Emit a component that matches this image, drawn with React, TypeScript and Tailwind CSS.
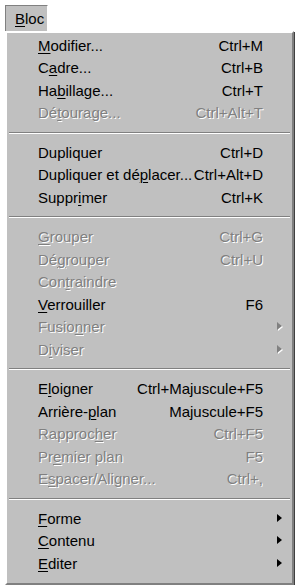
import React from "react";

type Item =
  | { sep: true }
  | { sep?: false; t: string; u: number; sc?: string; dis?: boolean; sub?: boolean };

const items: Item[] = [
  { t: "Modifier...", u: 0, sc: "Ctrl+M" },
  { t: "Cadre...", u: 1, sc: "Ctrl+B" },
  { t: "Habillage...", u: 2, sc: "Ctrl+T" },
  { t: "Détourage...", u: 2, sc: "Ctrl+Alt+T", dis: true },
  { sep: true },
  { t: "Dupliquer", u: -1, sc: "Ctrl+D" },
  { t: "Dupliquer et déplacer...", u: 15, sc: "Ctrl+Alt+D" },
  { t: "Supprimer", u: 5, sc: "Ctrl+K" },
  { sep: true },
  { t: "Grouper", u: 0, sc: "Ctrl+G", dis: true },
  { t: "Dégrouper", u: 2, sc: "Ctrl+U", dis: true },
  { t: "Contraindre", u: 3, dis: true },
  { t: "Verrouiller", u: 0, sc: "F6" },
  { t: "Fusionner", u: 5, dis: true, sub: true },
  { t: "Diviser", u: 1, dis: true, sub: true },
  { sep: true },
  { t: "Eloigner", u: 1, sc: "Ctrl+Majuscule+F5" },
  { t: "Arrière-plan", u: 8, sc: "Majuscule+F5" },
  { t: "Rapprocher", u: 7, sc: "Ctrl+F5", dis: true },
  { t: "Premier plan", u: 2, sc: "F5", dis: true },
  { t: "Espacer/Aligner...", u: 1, sc: "Ctrl+,", dis: true },
  { sep: true },
  { t: "Forme", u: 0, sub: true },
  { t: "Contenu", u: 0, sub: true },
  { t: "Editer", u: 0, sub: true },
];

function Label({ t, u }: { t: string; u: number }) {
  if (u < 0) return <>{t}</>;
  return (
    <>
      {t.slice(0, u)}
      <span className="underline underline-offset-[2px] decoration-1">{t[u]}</span>
      {t.slice(u + 1)}
    </>
  );
}

function Arrow({ dis }: { dis?: boolean }) {
  return (
    <svg width="8" height="11" viewBox="0 0 8 11" className="block">
      {dis && <path d="M2 2 L7 6 L2 10 Z" fill="#ffffff" />}
      <path d="M1 1 L6 5 L1 9 Z" fill={dis ? "#808080" : "#000000"} />
    </svg>
  );
}

export default function App() {
  return (
    <div
      className="min-h-[585px] bg-white pl-[5px] pt-[5px] text-[15px] leading-none text-black"
      style={{ fontFamily: '"Liberation Sans", Arial, sans-serif' }}
    >
      <div className="flex h-[26px] w-[43px] items-center border-l border-t border-r border-l-[#808080] border-t-[#808080] border-r-white bg-[#c0c0c0] pl-[9px]">
        <span>
          <span className="underline underline-offset-[2px] decoration-1">B</span>loc
        </span>
      </div>
      <div className="w-[289px] border-2 border-l-[#ffffff] border-t-[#ffffff] border-r-[#808080] border-b-[#808080] bg-[#c0c0c0] pb-[8px] pt-[1px] shadow-[1px_1px_0_#404040]">
        {items.map((it, i) =>
          it.sep ? (
            <div key={i} className="flex h-[17px] flex-col justify-center px-[2px]">
              <div className="h-px bg-[#808080]" />
              <div className="h-px bg-white" />
            </div>
          ) : (
            <div
              key={i}
              className={
                "flex h-[22.5px] items-center pl-[31px] " +
                (it.dis ? "text-[#808080] [text-shadow:1px_1px_0_#ffffff]" : "text-black")
              }
            >
              <span className="flex-1 whitespace-nowrap">
                <Label t={it.t} u={it.u} />
              </span>
              {it.sc && <span className="whitespace-nowrap">{it.sc}</span>}
              <span className="flex w-[29px] justify-start pl-[13px]">{it.sub && <Arrow dis={it.dis} />}</span>
            </div>
          )
        )}
      </div>
    </div>
  );
}
